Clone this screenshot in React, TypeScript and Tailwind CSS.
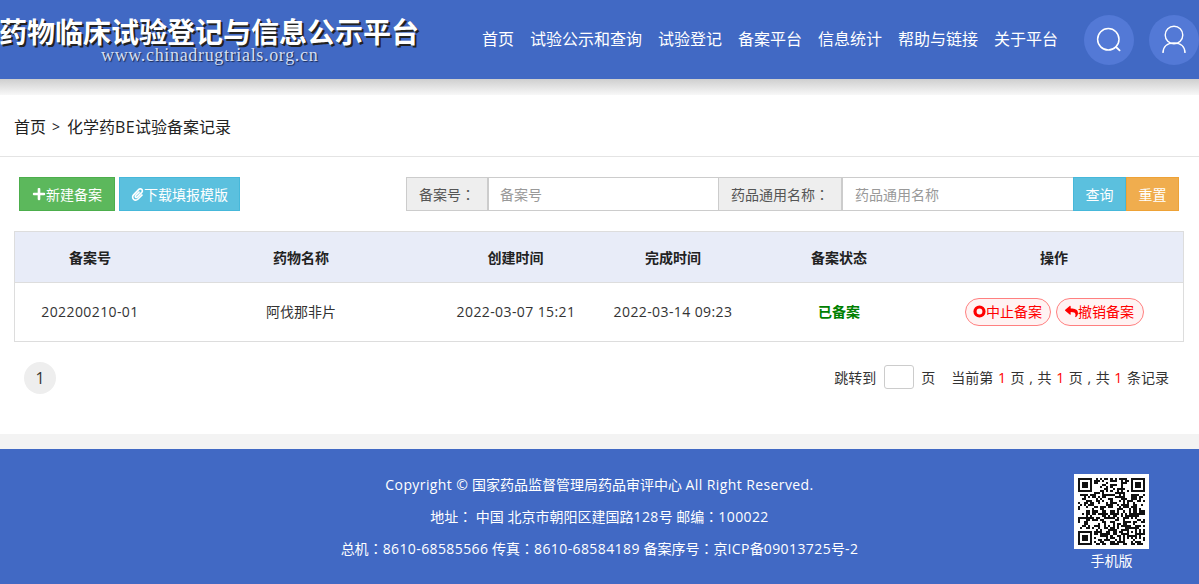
import React from "react";
import { FaPlus, FaPaperclip, FaReply } from "react-icons/fa";

const FONT = "font-['Open_Sans','Noto_Sans_CJK_SC',sans-serif]";

const nav = ["首页", "试验公示和查询", "试验登记", "备案平台", "信息统计", "帮助与链接", "关于平台"];
const GRID = "grid grid-cols-[150px_272px_158px_156px_176px_1fr]";

function L({ children }: { children: React.ReactNode }) {
  return <span className="tracking-[0.4px]">{children}</span>;
}

function Colon() {
  return <span className="font-['Noto_Sans_CJK_TC',sans-serif]">：</span>;
}

function qrCells() {
  const n = 33;
  const cells: [number, number][] = [];
  let s = 20220314;
  const finder = (x: number, y: number, ox: number, oy: number) => {
    const dx = x - ox, dy = y - oy;
    if (dx < -1 || dy < -1 || dx > 7 || dy > 7) return null;
    if (dx < 0 || dy < 0 || dx > 6 || dy > 6) return false;
    if (dx === 0 || dy === 0 || dx === 6 || dy === 6) return true;
    if (dx >= 2 && dx <= 4 && dy >= 2 && dy <= 4) return true;
    return false;
  };
  const align = (x: number, y: number) => {
    const dx = Math.abs(x - 26), dy = Math.abs(y - 26);
    if (dx > 2 || dy > 2) return null;
    return dx === 2 || dy === 2 || (dx === 0 && dy === 0);
  };
  for (let y = 0; y < n; y++) {
    for (let x = 0; x < n; x++) {
      s = (s * 1103515245 + 12345) & 0x7fffffff;
      let on: boolean = ((s >> 16) & 1) === 1;
      for (const [ox, oy] of [[0, 0], [n - 7, 0], [0, n - 7]]) {
        const f = finder(x, y, ox, oy);
        if (f !== null) on = f;
      }
      const a = align(x, y);
      if (a !== null) on = a;
      if (on) cells.push([x, y]);
    }
  }
  return cells;
}

function QR() {
  return (
    <div className="w-[75px] h-[75px] bg-white p-[4px]">
      <svg viewBox="0 0 33 33" className="w-full h-full block" shapeRendering="crispEdges">
        {qrCells().map(([x, y]) => (
          <rect key={`${x}-${y}`} x={x} y={y} width="1" height="1" fill="#111" />
        ))}
      </svg>
    </div>
  );
}

function Ring() {
  return (
    <svg width="13" height="13" viewBox="0 0 13 13" className="shrink-0">
      <circle cx="6.5" cy="6.5" r="4.5" fill="none" stroke="#ff0000" strokeWidth="3.2" />
    </svg>
  );
}

export default function App() {
  return (
    <div className={`${FONT} w-[1199px] h-[584px] overflow-hidden bg-white text-[#333]`}>
      <header className="h-[79px] bg-[#4169c4] flex items-center overflow-hidden">
        <div className="w-[482px] shrink-0 h-full flex flex-col">
          <div className="h-[17px]" />
          <div className="h-[28px] w-[440px] -ml-[1px] text-[28px] leading-[28px] font-bold text-white font-['Noto_Sans_CJK_SC',sans-serif] [text-shadow:2px_2px_0_#222] whitespace-nowrap">
            药物临床试验登记与信息公示平台
          </div>
          <div className="mt-[1px] pl-[101px] text-[18px] leading-[18px] tracking-[0.67px] text-[#d4def2] font-['Liberation_Serif',serif] [text-shadow:1px_1px_1px_#1c2c55] whitespace-nowrap">
            www.chinadrugtrials.org.cn
          </div>
        </div>
        <nav className="flex gap-4 text-white text-[16px] whitespace-nowrap -mt-[1px]">
          {nav.map((n) => (
            <span key={n}>{n}</span>
          ))}
        </nav>
        <div className="ml-[26px] flex gap-[15px]">
          <div className="w-[50px] h-[50px] rounded-full bg-[#5379d6] flex items-center justify-center">
            <svg width="26" height="26" viewBox="0 0 26 26" fill="none" stroke="#fff" strokeWidth="1.5" strokeLinecap="round">
              <circle cx="12.3" cy="12.3" r="10.7" />
              <path d="M20 20l3.6 3.4" strokeWidth="1.8" />
            </svg>
          </div>
          <div className="w-[50px] h-[50px] rounded-full bg-[#5379d6] flex items-center justify-center">
            <svg width="26" height="30" viewBox="0 0 26 30" fill="none" stroke="#fff" strokeWidth="1.4">
              <circle cx="13" cy="10" r="8.8" />
              <path d="M2 28c0-6.5 4.5-10 11-10s11 3.5 11 10" />
            </svg>
          </div>
        </div>
      </header>
      <div className="h-4 bg-gradient-to-b from-[#cfcfcf] to-[#f8f8f8]" />

      <main className="h-[339px] bg-white flex flex-col">
        <div className="h-[62px] shrink-0 border-b border-[#e4e4e4] pl-[14px] pt-[2px] flex items-center text-[16px] text-[#222] whitespace-nowrap">
          首页<span className="ml-[6px] mr-[7px] text-[14px]">&gt;</span>化学药<L>BE</L>试验备案记录
        </div>

        <div className="mt-[20px] h-[34px] shrink-0 pl-[19px] pr-[20px] flex items-stretch text-[14px] text-white whitespace-nowrap">
          <div className="w-[96px] bg-[#5cb85c] border border-[#4cae4c] flex items-center justify-center">
            <FaPlus size={14} className="shrink-0" />
            新建备案
          </div>
          <div className="ml-[4px] w-[121px] bg-[#5bc0de] border border-[#46b8da] flex items-center justify-center">
            <FaPaperclip size={13} className="shrink-0" />
            下载填报模版
          </div>
          <div className="ml-auto flex items-stretch">
            <div className="w-[82px] bg-[#eeeeee] border border-[#ccc] text-[#555] flex items-center justify-center">备案号<Colon /></div>
            <div className="w-[230px] border-y border-l border-[#ccc] pl-[11px] text-[#999] flex items-center">备案号</div>
            <div className="w-[124px] bg-[#eeeeee] border border-[#ccc] text-[#555] flex items-center justify-center">药品通用名称<Colon /></div>
            <div className="w-[231px] border-y border-l border-[#ccc] pl-[12px] text-[#999] flex items-center">药品通用名称</div>
            <div className="w-[53px] bg-[#5bc0de] border border-[#46b8da] flex items-center justify-center">查询</div>
            <div className="w-[53px] bg-[#f0ad4e] border border-[#eea236] flex items-center justify-center">重置</div>
          </div>
        </div>

        <div className="mt-[20px] mx-[14px] w-[1170px] border border-[#dddddd] text-[14px] text-[#333]">
          <div className={`${GRID} h-[51px] bg-[#e8ecf8] border-b border-[#dddddd] font-bold text-[#222] items-center text-center`}>
            <div>备案号</div>
            <div>药物名称</div>
            <div className="pr-[1px]">创建时间</div>
            <div>完成时间</div>
            <div>备案状态</div>
            <div className="pr-[2px]">操作</div>
          </div>
          <div className={`${GRID} h-[58px] pb-[2px] items-center text-center`}>
            <div><L>202200210-01</L></div>
            <div>阿伐那非片</div>
            <div><L>2022-03-07 15:21</L></div>
            <div><L>2022-03-14 09:23</L></div>
            <div className="font-bold text-[#008000]">已备案</div>
            <div className="pr-[2px] mt-[2px] flex justify-center gap-[5px] text-[#ff0000] whitespace-nowrap">
              <div className="h-[28px] w-[86px] pb-[2px] rounded-full border border-[#ff8080] bg-[#fff3f3] flex items-center justify-center">
                <Ring />
                中止备案
              </div>
              <div className="h-[28px] w-[88px] pb-[2px] rounded-full border border-[#ff8080] bg-[#fff3f3] flex items-center justify-center">
                <FaReply size={13} className="shrink-0" />
                撤销备案
              </div>
            </div>
          </div>
        </div>

        <div className="mt-[20px] pl-[24px] pr-[30px] flex items-center justify-between text-[14px] whitespace-nowrap">
          <div className="w-[32px] h-[32px] rounded-full bg-[#eeeeee] flex items-center justify-center text-[16px] text-[#333]">1</div>
          <div className="flex items-center mb-[2px]">
            <span>跳转到</span>
            <div className="ml-[8px] w-[30px] h-[24px] border border-[#ccc] rounded-[3px] bg-white" />
            <span className="ml-[7px]">页</span>
            <span className="ml-[16px]">
              当前第 <span className="text-[#ff0000] mx-[1px]">1</span> 页<span className="mx-[1px]"> , </span>共 <span className="text-[#ff0000] mx-[1px]">1</span> 页<span className="mx-[1px]"> , </span>共 <span className="text-[#ff0000] mx-[1px]">1</span> 条记录
            </span>
          </div>
        </div>
      </main>

      <div className="h-[15px] bg-[#f3f3f3]" />

      <footer className="h-[135px] bg-[#4169c4] text-white grid grid-cols-[1fr_auto_1fr]">
        <div />
        <div className="pt-[20px] flex flex-col items-center text-[14px] leading-[32px] whitespace-nowrap">
          <div className="h-[32px]"><L>Copyright ©</L> 国家药品监督管理局药品审评中心 <L>All Right Reserved.</L></div>
          <div className="h-[32px] -mt-[1px]">地址<Colon /> 中国 北京市朝阳区建国路<L>128</L>号 邮编<Colon /><L>100022</L></div>
          <div className="h-[32px]">总机<Colon /><L>8610-68585566</L> 传真<Colon /><L>8610-68584189</L> 备案序号<Colon />京<L>ICP</L>备<L>09013725</L>号<L>-2</L></div>
        </div>
        <div className="flex justify-end pr-[50px] pt-[25px]">
          <div className="flex flex-col items-center">
            <QR />
            <div className="mt-[2px] text-[14px] leading-[20px]">手机版</div>
          </div>
        </div>
      </footer>
    </div>
  );
}
